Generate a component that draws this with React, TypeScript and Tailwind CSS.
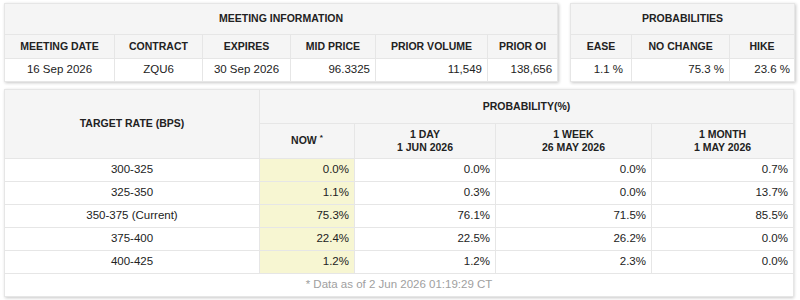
import React from 'react';

// FedWatch-style meeting probability tables

const meeting = {
  date: '16 Sep 2026',
  contract: 'ZQU6',
  expires: '30 Sep 2026',
  midPrice: '96.3325',
  priorVolume: '11,549',
  priorOi: '138,656',
};

const probs = { ease: '1.1 %', noChange: '75.3 %', hike: '23.6 %' };

const rows = [
  { rate: '300-325', now: '0.0%', day: '0.0%', week: '0.0%', month: '0.7%' },
  { rate: '325-350', now: '1.1%', day: '0.3%', week: '0.0%', month: '13.7%' },
  { rate: '350-375 (Current)', now: '75.3%', day: '76.1%', week: '71.5%', month: '85.5%' },
  { rate: '375-400', now: '22.4%', day: '22.5%', week: '26.2%', month: '0.0%' },
  { rate: '400-425', now: '1.2%', day: '1.2%', week: '2.3%', month: '0.0%' },
];

const th = 'border border-[#e6e6e6] bg-[#f5f5f5] font-bold text-[10.5px] text-[#222] text-center align-middle';
const td = 'border border-[#e6e6e6] text-[11.5px] text-[#222] align-middle';

export default function App() {
  return (
    <div className="w-[800px] h-[300px] bg-white pl-[4px] pt-[3px] font-['Liberation_Sans',Arial,sans-serif]">
      <div className="flex gap-[12px]">
        {/* Meeting information */}
        <div className="shadow-[1px_1px_3px_rgba(0,0,0,0.22)]">
          <table className="table-fixed border-collapse w-[553px]">
            <colgroup>
              <col className="w-[110px]" />
              <col className="w-[88px]" />
              <col className="w-[88px]" />
              <col className="w-[85px]" />
              <col className="w-[112px]" />
              <col className="w-[70px]" />
            </colgroup>
            <thead>
              <tr className="h-[31px]">
                <th colSpan={6} className={th}>MEETING INFORMATION</th>
              </tr>
              <tr className="h-[24px]">
                <th className={th}>MEETING DATE</th>
                <th className={th}>CONTRACT</th>
                <th className={th}>EXPIRES</th>
                <th className={th}>MID PRICE</th>
                <th className={th}>PRIOR VOLUME</th>
                <th className={th}>PRIOR OI</th>
              </tr>
            </thead>
            <tbody>
              <tr className="h-[23px]">
                <td className={`${td} text-center`}>{meeting.date}</td>
                <td className={`${td} text-center`}>{meeting.contract}</td>
                <td className={`${td} text-center`}>{meeting.expires}</td>
                <td className={`${td} text-right pr-[5px]`}>{meeting.midPrice}</td>
                <td className={`${td} text-right pr-[5px]`}>{meeting.priorVolume}</td>
                <td className={`${td} text-right pr-[5px]`}>{meeting.priorOi}</td>
              </tr>
            </tbody>
          </table>
        </div>

        {/* Probabilities */}
        <div className="shadow-[1px_1px_3px_rgba(0,0,0,0.22)]">
          <table className="table-fixed border-collapse w-[224px]">
            <colgroup>
              <col className="w-[61px]" />
              <col className="w-[98px]" />
              <col className="w-[65px]" />
            </colgroup>
            <thead>
              <tr className="h-[31px]">
                <th colSpan={3} className={th}>PROBABILITIES</th>
              </tr>
              <tr className="h-[24px]">
                <th className={th}>EASE</th>
                <th className={th}>NO CHANGE</th>
                <th className={th}>HIKE</th>
              </tr>
            </thead>
            <tbody>
              <tr className="h-[23px]">
                <td className={`${td} text-right pr-[8px]`}>{probs.ease}</td>
                <td className={`${td} text-right pr-[5px]`}>{probs.noChange}</td>
                <td className={`${td} text-right pr-[4px]`}>{probs.hike}</td>
              </tr>
            </tbody>
          </table>
        </div>
      </div>

      {/* Target rate probabilities */}
      <div className="mt-[7px] w-[789px] shadow-[1px_1px_3px_rgba(0,0,0,0.22)]">
        <table className="table-fixed border-collapse w-[789px]">
          <colgroup>
            <col className="w-[255px]" />
            <col className="w-[95px]" />
            <col className="w-[141px]" />
            <col className="w-[156px]" />
            <col className="w-[142px]" />
          </colgroup>
          <thead>
            <tr className="h-[34px]">
              <th rowSpan={2} className={th}>TARGET RATE (BPS)</th>
              <th colSpan={4} className={th}>PROBABILITY(%)</th>
            </tr>
            <tr className="h-[35px]">
              <th className={th}>
                NOW<span className="relative -top-[4px] ml-[3px] text-[8px]">*</span>
              </th>
              <th className={`${th} leading-[13px]`}>1 DAY<br />1 JUN 2026</th>
              <th className={`${th} leading-[13px]`}>1 WEEK<br />26 MAY 2026</th>
              <th className={`${th} leading-[13px]`}>1 MONTH<br />1 MAY 2026</th>
            </tr>
          </thead>
          <tbody>
            {rows.map((r) => (
              <tr key={r.rate} className="h-[23px]">
                <td className={`${td} text-center`}>{r.rate}</td>
                <td className={`${td} text-right pr-[5px] bg-[#f7f6d2]`}>{r.now}</td>
                <td className={`${td} text-right pr-[5px]`}>{r.day}</td>
                <td className={`${td} text-right pr-[5px]`}>{r.week}</td>
                <td className={`${td} text-right pr-[5px]`}>{r.month}</td>
              </tr>
            ))}
            <tr className="h-[23px]">
              <td colSpan={5} className={`${td} text-center text-[#a0a0a0]`}>
                * Data as of 2 Jun 2026 01:19:29 CT
              </td>
            </tr>
          </tbody>
        </table>
      </div>
    </div>
  );
}
